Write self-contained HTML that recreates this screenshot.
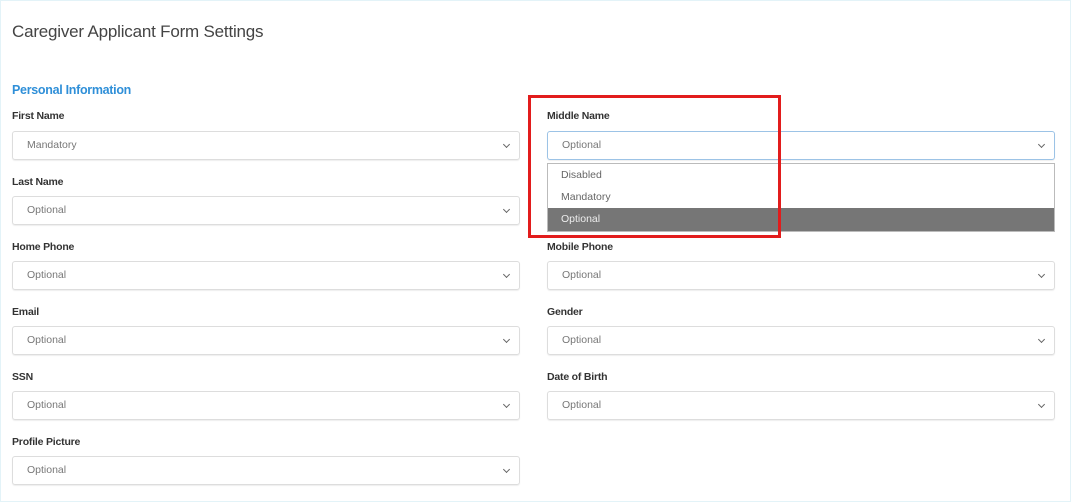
<!DOCTYPE html>
<html><head><style>
body{margin:0;width:1071px;height:502px;background:#fff;font-family:"Liberation Sans",sans-serif;position:relative;overflow:hidden}
.frame{position:absolute;left:0;top:0;width:1069px;height:500px;border:1px solid #e3f3f8}
.t{position:absolute;left:12px;top:22px;font-size:17px;color:#444;letter-spacing:-0.2px}
.pi{position:absolute;left:12px;top:83px;font-size:12.5px;font-weight:bold;color:#2f8fd8;letter-spacing:-0.3px}
.l{position:absolute;font-size:10.5px;font-weight:bold;color:#333;letter-spacing:-0.2px}
.s{position:absolute;width:508px;height:29px;border:1px solid #ddd;border-radius:3px;box-sizing:border-box;font-size:10.5px;color:#777;line-height:27px;padding-left:14px;box-shadow:0 1px 1px #eee}
.s:after{content:"";position:absolute;right:10px;top:10px;width:4px;height:4px;border-right:1.5px solid #666;border-bottom:1.5px solid #666;transform:rotate(45deg)}
.dd{position:absolute;left:547px;top:163px;width:508px;height:69px;border:1px solid #bbb;box-sizing:border-box;font-size:10.5px;color:#666;background:#fff}
.dd div{height:22px;line-height:22px;padding-left:13px}
.red{position:absolute;left:528px;top:95px;width:253px;height:143px;border:3px solid #e21c1c;box-sizing:border-box}
</style></head><body>
<div class="frame"></div>
<div class="t">Caregiver Applicant Form Settings</div>
<div class="pi">Personal Information</div>

<div class="l" style="left:12px;top:110px">First Name</div>
<div class="s" style="left:12px;top:131px">Mandatory</div>
<div class="l" style="left:547px;top:110px">Middle Name</div>
<div class="s" style="left:547px;top:131px;border-color:#9cc3e6">Optional</div>

<div class="l" style="left:12px;top:176px">Last Name</div>
<div class="s" style="left:12px;top:196px">Optional</div>

<div class="l" style="left:12px;top:241px">Home Phone</div>
<div class="s" style="left:12px;top:261px">Optional</div>
<div class="l" style="left:547px;top:241px">Mobile Phone</div>
<div class="s" style="left:547px;top:261px">Optional</div>

<div class="l" style="left:12px;top:306px">Email</div>
<div class="s" style="left:12px;top:326px">Optional</div>
<div class="l" style="left:547px;top:306px">Gender</div>
<div class="s" style="left:547px;top:326px">Optional</div>

<div class="l" style="left:12px;top:371px">SSN</div>
<div class="s" style="left:12px;top:391px">Optional</div>
<div class="l" style="left:547px;top:371px">Date of Birth</div>
<div class="s" style="left:547px;top:391px">Optional</div>

<div class="l" style="left:12px;top:436px">Profile Picture</div>
<div class="s" style="left:12px;top:456px">Optional</div>

<div class="dd"><div>Disabled</div><div>Mandatory</div><div style="background:#767676;color:#eee;height:23px">Optional</div></div>
<div class="red"></div>
</body></html>
